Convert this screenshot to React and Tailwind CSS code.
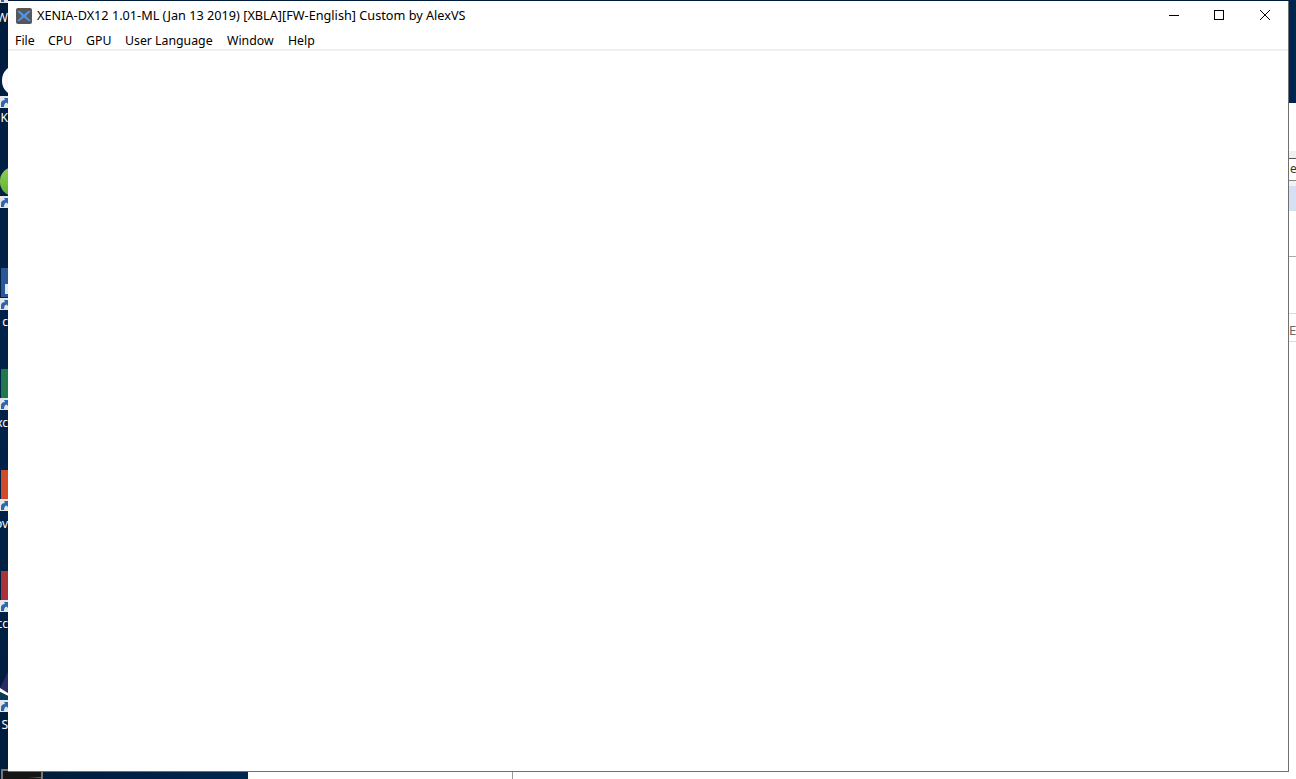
const Shortcut = ({ top }) => (
  <div className="absolute left-0 w-[8px] h-[12px] bg-[#e6e6e6]" style={{ top }}>
    <svg width="8" height="12" viewBox="0 0 8 12">
      <path d="M1 11 L1 7 Q1.5 4 5 4 L4 2 L8 2 L8 8 L6.5 6.5 Q4 7 4 11 Z" fill="#2b67b0" />
    </svg>
  </div>
)

const Label = ({ top, children }) => (
  <div className="absolute right-0 text-[12px] leading-[14px] text-white whitespace-nowrap" style={{ top }}>
    {children}
  </div>
)

const DesktopIcons = () => (
  <div className="relative w-[8px] shrink-0 overflow-hidden bg-gradient-to-b from-[#001c3d] via-[#00234a] to-[#001c3d] font-['Noto_Sans',sans-serif]">
    <Shortcut top={-9} />
    <Label top={11}>W</Label>
    <div className="absolute left-[2px] top-[65px] w-[30px] h-[31px] rounded-full bg-gradient-to-r from-white to-[#d5dcf0]" />
    <Shortcut top={96} />
    <Label top={111}>K</Label>

    <div className="absolute left-0 top-[167px] w-[28px] h-[29px] rounded-full bg-gradient-to-b from-[#8fd14f] to-[#5fb035]" />
    <Shortcut top={196} />

    <div className="absolute left-[1px] top-[268px] w-[7px] h-[29px] bg-[#2b5797]">
      <div className="absolute left-[4px] top-[16px] w-[3px] h-[10px] bg-[#dfe8f5]" />
    </div>
    <Shortcut top={298} />
    <Label top={315}>c</Label>

    <div className="absolute left-[1px] top-[369px] w-[7px] h-[29px] bg-[#1f7a4a]" />
    <Shortcut top={398} />
    <Label top={416}>xc</Label>

    <div className="absolute left-[1px] top-[470px] w-[7px] h-[29px] bg-[#d24b26]" />
    <Shortcut top={499} />
    <Label top={517}>ov</Label>

    <div className="absolute left-[1px] top-[571px] w-[7px] h-[29px] bg-[#a93338]" />
    <Shortcut top={600} />
    <Label top={617}>cc</Label>

    <svg className="absolute left-0 top-[672px]" width="8" height="28" viewBox="0 0 8 28">
      <path d="M0 16 L8 0 L8 21 Z" fill="#2a2a66" />
      <path d="M0 16 L8 21 L8 24 L0 20 Z" fill="#ffffff" />
      <path d="M0 20 L8 24 L8 28 L0 28 Z" fill="#0a3a5a" />
    </svg>
    <Shortcut top={700} />
    <Label top={718}>S</Label>
  </div>
)

const menuItems = [
  { label: 'File', width: 'w-[33px]' },
  { label: 'CPU', width: 'w-[38px]' },
  { label: 'GPU', width: 'w-[39px]' },
  { label: 'User Language', width: 'w-[102px]' },
  { label: 'Window', width: 'w-[61px]' },
  { label: 'Help', width: 'w-[40px]' },
]

const XeniaIcon = () => (
  <svg width="16" height="16" viewBox="0 0 16 16">
    <rect width="16" height="16" rx="2" fill="#555759" />
    <path d="M1 3 L4 3 L8 6.5 L12 3 L15 3 L10 8 L15 13 L12.5 13 L8 9.5 L3.5 13 L1 13 L6 8 Z" fill="#4f93e6" />
  </svg>
)

const WindowControls = () => (
  <div className="flex items-center ml-auto text-black">
    <svg width="46" height="20" viewBox="0 0 46 20">
      <path d="M20 9.5 H30" stroke="#000" fill="none" />
    </svg>
    <svg width="46" height="20" viewBox="0 0 46 20">
      <rect x="19.5" y="4.5" width="9" height="9" stroke="#000" fill="none" />
    </svg>
    <svg width="46" height="20" viewBox="0 0 46 20">
      <path d="M19 4 L29 14 M29 4 L19 14" stroke="#000" fill="none" />
    </svg>
  </div>
)

const XeniaWindow = () => (
  <div className="relative z-10 flex flex-col w-[1281px] shrink-0 bg-white border-r border-b border-[#707070] mt-[1px] font-['Noto_Sans',sans-serif]">
    <div className="flex items-center h-[29px] pl-[8px] pr-[1px] pt-[1px]">
      <XeniaIcon />
      <span className="ml-[5px] text-[12.7px] text-black whitespace-nowrap">
        XENIA-DX12 1.01-ML (Jan 13 2019) [XBLA][FW-English] Custom by AlexVS
      </span>
      <WindowControls />
    </div>
    <div className="flex items-center h-[21px] pl-[7px] pt-[4px] border-b-2 border-[#f0f0f0] text-[12.3px] text-black">
      {menuItems.map((item) => (
        <span key={item.label} className={`${item.width} whitespace-nowrap`}>{item.label}</span>
      ))}
    </div>
    <div className="flex-1" />
  </div>
)

// sliver of another window showing past the right edge
const BehindWindow = () => (
  <div className="flex-1 flex flex-col">
    <div className="h-[103px] bg-[#00244d]" />
    <div className="flex-1 flex flex-col bg-white font-['Noto_Sans',sans-serif] overflow-hidden">
      <div className="h-[48px] shrink-0" />
      <div className="h-[7px] shrink-0 bg-[#f0f0f0]" />
      <div className="h-[22px] shrink-0 border-t border-[#555] text-[12px] leading-[20px] text-[#333] pl-[1px]">e</div>
      <div className="h-[6px] shrink-0 border-t border-[#888] bg-[#f2f2f2]" />
      <div className="h-[25px] shrink-0 bg-[#d3e1f2]" />
      <div className="h-[45px] shrink-0" />
      <div className="h-[57px] shrink-0 border-t border-[#aaa]" />
      <div className="h-[7px] shrink-0 border-t border-[#ddd]" />
      <div className="h-[21px] shrink-0 text-[13px] leading-[20px] text-[#666]">EI</div>
      <div className="flex-1 border-t border-[#ddd]" />
    </div>
  </div>
)

const App = () => (
  <div className="flex flex-col w-[1296px] h-[779px] overflow-hidden bg-[#001c3d]">
    <div className="flex h-[772px] shrink-0">
      <DesktopIcons />
      <XeniaWindow />
      <BehindWindow />
    </div>
    <div className="flex h-[7px] shrink-0">
      <div className="relative w-[248px] shrink-0 bg-gradient-to-r from-[#001a36] to-[#00264f]">
        <div className="absolute left-[1px] top-[-3px] w-[42px] h-[10px] bg-[#151515] border-t-2 border-l-2 border-r-2 border-[#777]" />
        <div className="absolute left-[28px] top-[5px] w-[15px] h-[1px] bg-gradient-to-r from-[#151515] to-[#777]" />
      </div>
      <div className="w-[265px] shrink-0 bg-white border-r border-[#999]" />
      <div className="flex-1 bg-white" />
    </div>
  </div>
)

export default App
